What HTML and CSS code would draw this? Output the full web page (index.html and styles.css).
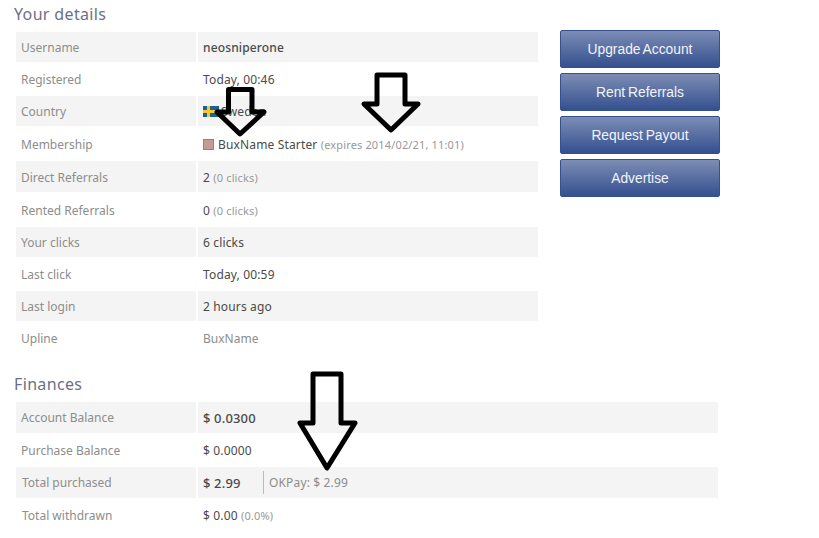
FILE: index.html
```html
<!DOCTYPE html>
<html lang="en">
<head>
<meta charset="utf-8">
<title>Your details</title>
<link rel="stylesheet" href="styles.css">
</head>
<body>
<main class="page">
  <div class="top">
    <section class="details">
      <h2 class="title">Your details</h2>
      <div class="grid">
        <div class="row alt"><div class="label">Username</div><div class="value strong">neosniperone</div></div>
        <div class="row"><div class="label">Registered</div><div class="value">Today, 00:46</div></div>
        <div class="row alt"><div class="label">Country</div><div class="value"><svg class="flag" width="16" height="11" viewBox="0 0 16 11"><rect width="16" height="11" fill="#1d5f96"/><rect x="4" width="3" height="11" fill="#f2c92e"/><rect y="4" width="16" height="3" fill="#f2c92e"/></svg>Sweden</div></div>
        <div class="row tall low"><div class="label">Membership</div><div class="value"><span class="swatch"></span>BuxName Starter <small class="note">(expires 2014/02/21, 11:01)</small></div></div>
        <div class="row tall low alt"><div class="label">Direct Referrals</div><div class="value">2 <small class="note">(0 clicks)</small></div></div>
        <div class="row tall low"><div class="label">Rented Referrals</div><div class="value">0 <small class="note">(0 clicks)</small></div></div>
        <div class="row alt"><div class="label">Your clicks</div><div class="value">6 clicks</div></div>
        <div class="row"><div class="label">Last click</div><div class="value">Today, 00:59</div></div>
        <div class="row alt"><div class="label">Last login</div><div class="value">2 hours ago</div></div>
        <div class="row"><div class="label">Upline</div><div class="value muted">BuxName</div></div>
      </div>
    </section>
    <nav class="actions">
      <a class="btn">Upgrade Account</a>
      <a class="btn">Rent Referrals</a>
      <a class="btn">Request Payout</a>
      <a class="btn">Advertise</a>
    </nav>
  </div>
  <section class="finances">
    <h2 class="title">Finances</h2>
    <div class="grid wide">
      <div class="row tall alt"><div class="label">Account Balance</div><div class="value strong big">$ 0.0300</div></div>
      <div class="row"><div class="label">Purchase Balance</div><div class="value">$ 0.0000</div></div>
      <div class="row tall alt"><div class="label nudge">Total purchased</div><div class="value"><span class="strong big amount">$ 2.99</span><span class="split">OKPay: $ 2.99</span></div></div>
      <div class="row"><div class="label nudge">Total withdrawn</div><div class="value">$ 0.00 <small class="note">(0.0%)</small></div></div>
    </div>
  </section>
</main>
<svg class="arrow" width="819" height="538" viewBox="0 0 819 538"><path d="M228.500 89.500H252V112H264L240 134L217 112H228.500Z"/><path d="M377 75H405V104H418L391 130L364 104H377Z"/><path d="M313 374H341V423H355L327 468L300 423H313Z"/></svg>
</body>
</html>
```
FILE: styles.css
```css
* { box-sizing: border-box; }
html, body { margin: 0; padding: 0; background: #fff; }
body { font-family: "Noto Sans", "Open Sans", sans-serif; font-size: 12px; color: #4a4a4a; position: relative; width: 819px; height: 538px; overflow: hidden; }
.page { padding: 0 0 0 14px; }
.top { display: flex; height: 374px; }
.details { width: 524px; }
.title { margin: 0; height: 32px; padding-top: 4px; font-size: 16px; line-height: 20px; font-weight: 400; letter-spacing: 0.35px; color: #6c7086; }
.finances .title { height: 28px; padding-top: 0; }
.grid { margin-left: 2px; display: flex; flex-direction: column; gap: 2px; }
.row { display: flex; gap: 2px; height: 30px; }
.row.tall { height: 31px; }
.row.low .label, .row.low .value { padding-top: 2px; }
.alt .label, .alt .value { background: #f4f4f4; }
.label { width: 180px; flex: none; padding-left: 5px; display: flex; align-items: center; color: #8d8d8d; }
.label.nudge { padding-left: 6px; }
.value { flex: 1; padding-left: 5px; display: flex; align-items: center; white-space: pre; letter-spacing: 0.15px; color: #4a4a4a; }
.wide { width: 702px; }
.strong { font-weight: 500; }
.big { font-size: 13px; }
.muted { color: #8d8d8d; letter-spacing: 0; }
.note { font-size: 11px; color: #999; letter-spacing: 0.15px; }
.flag { margin-right: 2px; flex: none; }
.swatch { width: 11px; height: 11px; margin-right: 4px; background: #c29a96; border: 1px solid #a87a76; flex: none; }
.amount { width: 60px; }
.split { border-left: 1px solid #bbb; padding: 3px 0 3px 5px; color: #8d8d8d; }
.actions { margin-left: 22px; padding-top: 30px; display: flex; flex-direction: column; gap: 5px; width: 160px; }
.btn { height: 38px; padding-top: 1px; display: flex; align-items: center; justify-content: center; border: 1px solid #34508f; border-radius: 2px; background: linear-gradient(#7c8db5, #34508f); color: #f2f4fa; font-family: "Liberation Sans", Arial, sans-serif; font-size: 13.800px; word-spacing: -1px; }
.arrow { position: absolute; left: 0; top: 0; pointer-events: none; }
.arrow path { fill: none; stroke: #000; stroke-width: 5; stroke-linejoin: round; }
```
